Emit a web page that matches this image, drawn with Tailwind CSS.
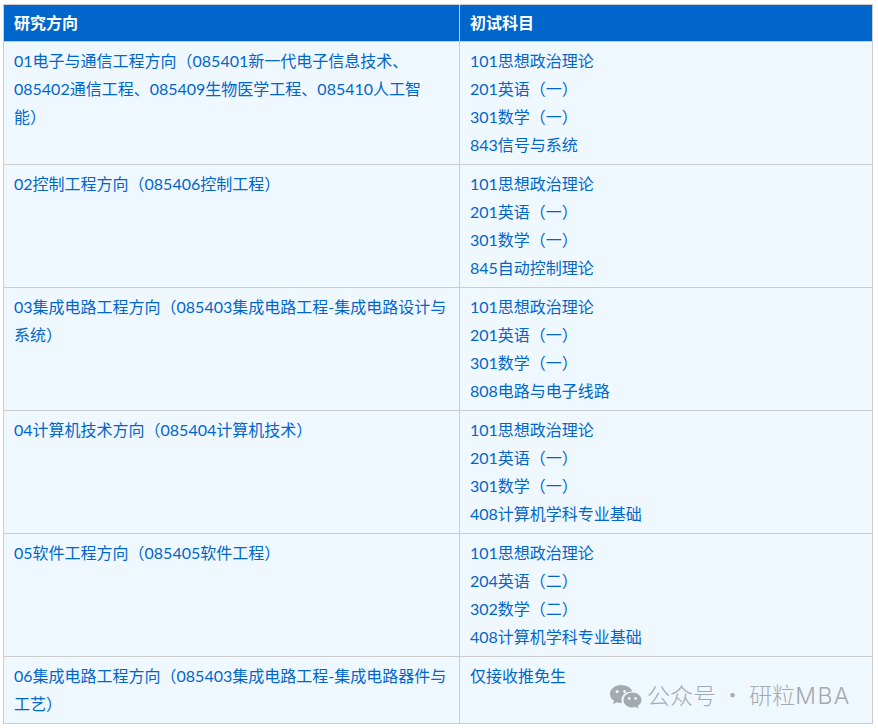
<!DOCTYPE html>
<html lang="zh-CN">
<head>
<meta charset="utf-8">
<script src="https://cdn.jsdelivr.net/npm/@tailwindcss/browser@4"></script>
</head>
<body class="relative h-[728px] w-[878px] overflow-hidden bg-white font-['Lato','Noto_Sans_CJK_SC',sans-serif] text-[16px] leading-[28px] text-[#0066cc] [text-spacing-trim:space-all]">
<div class="pl-[3px] pt-1">
<table class="w-[870px] table-fixed border-collapse bg-[#f0f8ff]">
<colgroup><col class="w-[456px]"><col></colgroup>
<thead>
<tr class="h-[37px] bg-[#0066cc] text-left font-bold text-white">
<th class="border border-[#cccccc] px-2.5 pt-0 pb-0 font-bold">研究方向</th>
<th class="border border-[#cccccc] px-2.5 pt-0 pb-0 font-bold">初试科目</th>
</tr>
</thead>
<tbody>
<tr>
<td class="border border-[#cccccc] px-2.5 py-[5px] align-top">01电子与通信工程方向（085401新一代电子信息技术、085402通信工程、085409生物医学工程、085410人工智能）</td>
<td class="border border-[#cccccc] px-2.5 py-[5px] align-top">101思想政治理论<br>201英语（一）<br>301数学（一）<br>843信号与系统</td>
</tr>
<tr>
<td class="border border-[#cccccc] px-2.5 py-[5px] align-top">02控制工程方向（085406控制工程）</td>
<td class="border border-[#cccccc] px-2.5 py-[5px] align-top">101思想政治理论<br>201英语（一）<br>301数学（一）<br>845自动控制理论</td>
</tr>
<tr>
<td class="border border-[#cccccc] px-2.5 py-[5px] align-top">03集成电路工程方向（085403集成电路工程-集成电路设计与系统）</td>
<td class="border border-[#cccccc] px-2.5 py-[5px] align-top">101思想政治理论<br>201英语（一）<br>301数学（一）<br>808电路与电子线路</td>
</tr>
<tr>
<td class="border border-[#cccccc] px-2.5 py-[5px] align-top">04计算机技术方向（085404计算机技术）</td>
<td class="border border-[#cccccc] px-2.5 py-[5px] align-top">101思想政治理论<br>201英语（一）<br>301数学（一）<br>408计算机学科专业基础</td>
</tr>
<tr>
<td class="border border-[#cccccc] px-2.5 py-[5px] align-top">05软件工程方向（085405软件工程）</td>
<td class="border border-[#cccccc] px-2.5 py-[5px] align-top">101思想政治理论<br>204英语（二）<br>302数学（二）<br>408计算机学科专业基础</td>
</tr>
<tr>
<td class="border border-[#cccccc] px-2.5 py-[5px] align-top">06集成电路工程方向（085403集成电路工程-集成电路器件与工艺）</td>
<td class="border border-[#cccccc] px-2.5 py-[5px] align-top">仅接收推免生</td>
</tr>
</tbody>
</table>
</div>
<div class="absolute left-[609px] top-[678px] flex items-center gap-[5px] font-['Noto_Sans_CJK_SC',sans-serif] text-[23px] font-light leading-[32px] text-[#a3abaf]">
<svg width="33" height="26" viewBox="0 0 33 26" aria-hidden="true">
<path fill="#a3abaf" d="M12 1C5.900 1 1 5 1 10c0 2.900 1.600 5.300 4.100 7l-1 3.200 3.700-2c1.300.4 2.700.7 4.200.7h.9c-.3-1-.5-1.900-.5-2.900 0-4.700 4.400-8.500 10-8.500h.9C22.300 3.800 17.600 1 12 1z"/>
<circle cx="8.200" cy="7.400" r="1.500" fill="#f0f8ff"/><circle cx="15.600" cy="7.400" r="1.500" fill="#f0f8ff"/>
<path fill="#a3abaf" d="M32.500 16c0-4.300-4.300-7.600-9-7.600-5 0-9 3.400-9 7.600s4 7.600 9 7.600c1 0 2.100-.2 3.100-.5l2.900 1.600-.8-2.600c2.300-1.500 3.800-3.600 3.800-6.100z"/>
<circle cx="20.200" cy="14.400" r="1.300" fill="#f0f8ff"/><circle cx="26.600" cy="14.400" r="1.300" fill="#f0f8ff"/>
</svg>
<span class="mb-[3px]">公众号 · 研粒<span class="font-['Inter',sans-serif] tracking-[1.5px]">MBA</span></span>
</div>
</body>
</html>
